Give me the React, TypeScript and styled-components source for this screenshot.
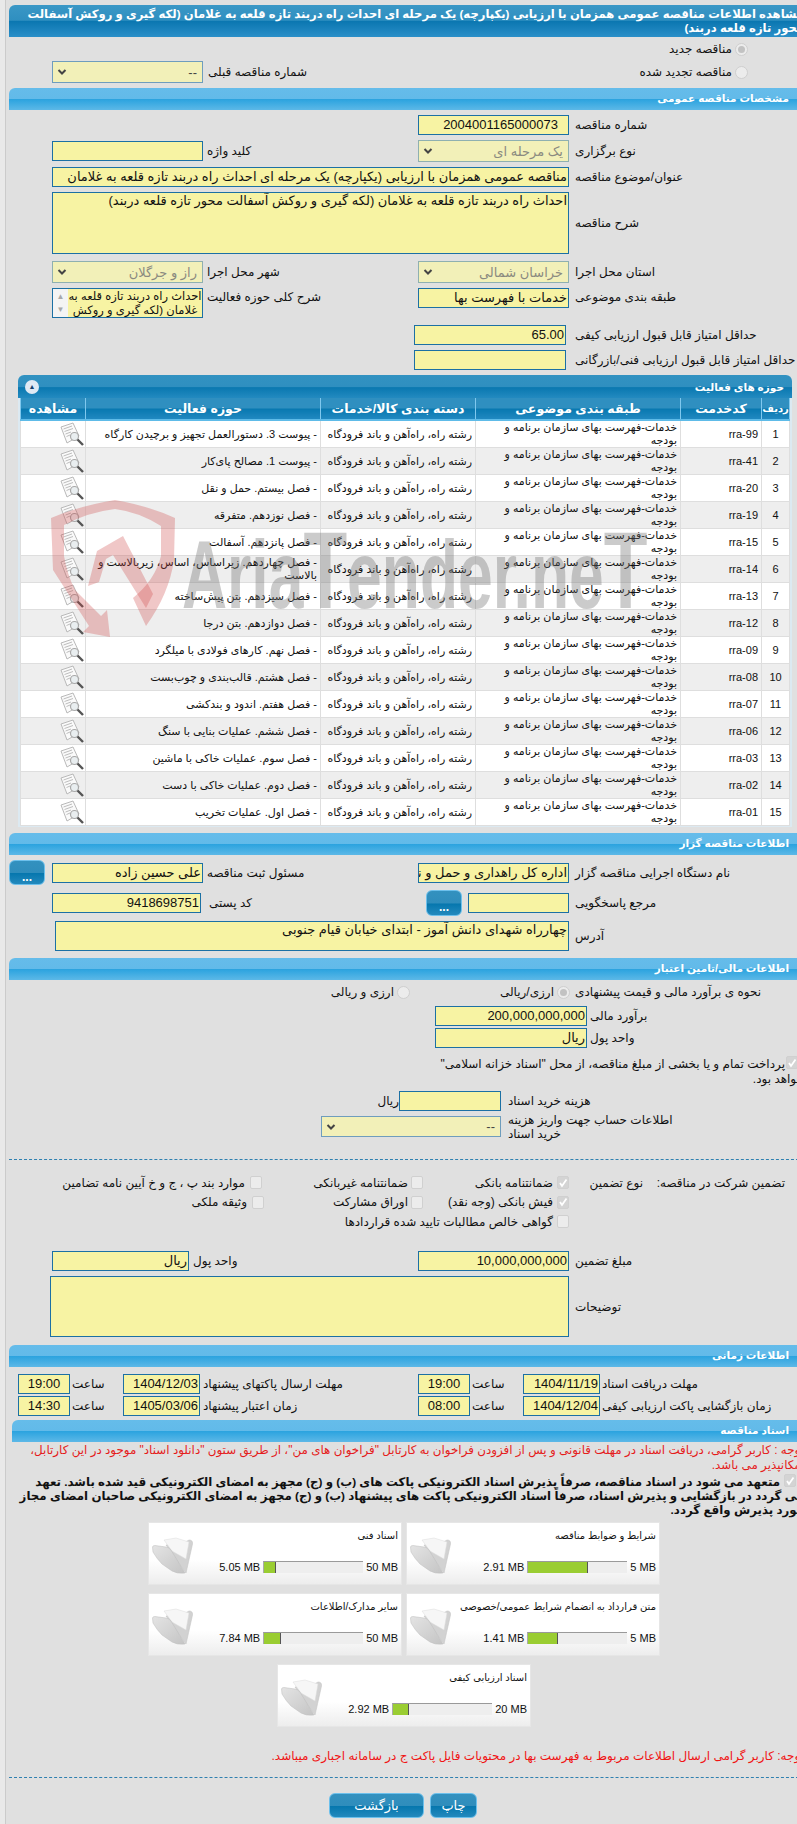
import React from "react";
import styled, { createGlobalStyle } from "styled-components";

const GlobalStyle = createGlobalStyle`
  html, body {
    margin: 0;
    padding: 0;
    overflow: hidden;
    background: #e9e9e9;
  }
  body {
    font-family: "Liberation Sans", "DejaVu Sans", sans-serif;
    color: #111;
  }
`;

const Page = styled.div`
  position: relative;
  box-sizing: border-box;
  direction: rtl;
  width: 799px;
  height: 1824px;
  margin-left: 5px;
  padding: 5px 0 0 3px;
  border-left: 1px solid #cbcbcb;
  background: #e0e0e0;
  font-size: 12px;
`;

const TitleBar = styled.div`
  box-sizing: border-box;
  height: 32px;
  padding: 2px 0 0 6px;
  border-radius: 6px 0 0 0;
  background: linear-gradient(#3a97c6 0, #2f8fc0 48%, #0a76b0 50%, #2a8fc8 100%);
  color: #fff;
  font-size: 11.6px;
  font-weight: bold;
  line-height: 14px;
`;

const SectionBar = styled.div<{ $mt?: number; $ml?: number }>`
  box-sizing: border-box;
  height: 22px;
  margin-top: ${(p) => p.$mt ?? 0}px;
  margin-left: ${(p) => p.$ml ?? 0}px;
  padding-right: 15px;
  border-radius: 6px 0 0 0;
  background: linear-gradient(#65bcea 0, #62bae9 50%, #2ba3df 51%, #5cb8e7 100%);
  color: #fff;
  font-size: 10.5px;
  font-weight: bold;
  line-height: 21px;
`;

const Row = styled.div<{ $mt?: number; $h?: number; $align?: string }>`
  display: flex;
  align-items: ${(p) => p.$align ?? "center"};
  height: ${(p) => p.$h ?? 20}px;
  margin-top: ${(p) => p.$mt ?? 0}px;
`;

const Label = styled.div<{ $w: number; $gap?: number; $lh?: number; $h?: number }>`
  flex: none;
  width: ${(p) => p.$w}px;
  height: ${(p) => (p.$h ? `${p.$h}px` : "auto")};
  margin-left: ${(p) => p.$gap ?? 6}px;
  font-size: 12px;
  line-height: ${(p) => p.$lh ?? (p.$h ?? 14)}px;
  text-align: left;
  white-space: nowrap;
`;

const Input = styled.div<{ $w: number; $h?: number; $mr?: number; $wrap?: boolean }>`
  flex: none;
  box-sizing: border-box;
  width: ${(p) => p.$w}px;
  height: ${(p) => p.$h ?? 20}px;
  margin-right: ${(p) => p.$mr ?? 0}px;
  padding: 0 1px;
  overflow: hidden;
  border: 1px solid #1c70a4;
  background: #f7f3a3;
  font-size: 13px;
  line-height: ${(p) => (p.$wrap ? 16 : (p.$h ?? 20) - 2)}px;
  text-align: right;
  white-space: ${(p) => (p.$wrap ? "normal" : "nowrap")};
`;

const CenterText = styled.span`
  display: block;
  padding-left: 14px;
  text-align: center;
`;

const TimeText = styled.span`
  display: block;
  text-align: center;
`;

const Select = styled.div<{ $w: number; $h?: number; $muted?: boolean }>`
  flex: none;
  display: flex;
  align-items: center;
  justify-content: space-between;
  box-sizing: border-box;
  width: ${(p) => p.$w}px;
  height: ${(p) => p.$h ?? 22}px;
  padding: 0 5px 0 4px;
  border: 1px solid ${(p) => (p.$muted ? "#8fb0b0" : "#6f9dbd")};
  background: #f2f0b8;
  color: ${(p) => (p.$muted ? "#8a8a80" : "#444")};
  font-size: 13px;
  white-space: nowrap;
`;

const ListBox = styled.div`
  flex: none;
  display: flex;
  box-sizing: border-box;
  width: 151px;
  height: 30px;
  overflow: hidden;
  border: 1px solid #1c70a4;
  background: #fff;
`;

const ListText = styled.div`
  flex: 1;
  background: #f7f3a3;
  font-size: 11.5px;
  line-height: 14px;
  text-align: center;
`;

const ListScroll = styled.div`
  flex: none;
  display: flex;
  flex-direction: column;
  justify-content: space-between;
  align-items: center;
  width: 15px;
  padding: 3px 0;
  box-sizing: border-box;
  background: #f4f4f4;
  color: #a8a8a8;
  font-size: 8px;
  line-height: 9px;
`;

const RadioDot = styled.span<{ $on?: boolean }>`
  flex: none;
  position: relative;
  display: inline-block;
  box-sizing: border-box;
  width: 13px;
  height: 13px;
  border: 1px solid #cfcfcf;
  border-radius: 50%;
  background: #ececec;
  &::after {
    content: "";
    display: ${(p) => (p.$on ? "block" : "none")};
    position: absolute;
    inset: 2px;
    border-radius: 50%;
    background: #c2c2c2;
  }
`;

const CheckBox = styled.span<{ $on?: boolean }>`
  flex: none;
  display: inline-flex;
  align-items: center;
  justify-content: center;
  box-sizing: border-box;
  width: 12px;
  height: 13px;
  border: 1px solid #d0d0d0;
  border-radius: 2px;
  background: ${(p) => (p.$on ? "#d4d4d4" : "#ececec")};
`;

const OptionRow = styled.div<{ $w?: number; $gap?: number; $mr?: number }>`
  flex: none;
  display: flex;
  align-items: center;
  gap: ${(p) => p.$gap ?? 3}px;
  width: ${(p) => (p.$w ? `${p.$w}px` : "auto")};
  margin-right: ${(p) => p.$mr ?? 0}px;
  font-size: 12px;
  white-space: nowrap;
`;

const Panel = styled.div`
  position: relative;
  box-sizing: border-box;
  width: 774px;
  height: 452px;
  margin: 5px 12px 0 0;
  padding: 0 2px 0 3px;
  border-radius: 6px 6px 0 0;
  background: #dce9f1;
`;

const PanelBar = styled.div`
  display: flex;
  align-items: center;
  justify-content: space-between;
  box-sizing: border-box;
  height: 23px;
  margin: 0 -2px 0 -3px;
  padding: 0 8px 0 5px;
  border-radius: 6px 6px 0 0;
  background: linear-gradient(#3292c1 0, #2f8fc0 50%, #0a78b0 55%, #238ac0 100%);
  color: #fff;
  font-size: 10.5px;
  font-weight: bold;
`;

const Collapse = styled.span`
  display: flex;
  align-items: center;
  justify-content: center;
  width: 14px;
  height: 14px;
  margin-left: 2px;
  border-radius: 50%;
  background: #dfe9f4;
  color: #16406e;
  font-size: 7px;
`;

const Table = styled.table`
  width: 769px;
  border-collapse: collapse;
  table-layout: fixed;
  font-size: 11px;
`;

const Head = styled.th<{ $fs?: number }>`
  height: 21px;
  padding: 0;
  overflow: hidden;
  border-left: 1px solid #7fc8ee;
  border-right: 1px solid #7fc8ee;
  border-bottom: 2px solid #5ebbe8;
  background: linear-gradient(#2f8fc0 0, #2f8fc0 48%, #0878b0 52%, #2088c0 100%);
  color: #fff;
  font-size: ${(p) => p.$fs ?? 12.5}px;
  font-weight: bold;
  white-space: nowrap;
`;

const Tr = styled.tr<{ $alt?: boolean }>`
  background: ${(p) => (p.$alt ? "#eeeeee" : "#ffffff")};
`;

const Td = styled.td<{ $center?: boolean; $nowrap?: boolean }>`
  box-sizing: border-box;
  height: 27px;
  padding: 0 3px;
  overflow: hidden;
  border-left: 1px solid #dedede;
  border-right: 1px solid #dedede;
  border-bottom: 1px solid #dedede;
  line-height: 13px;
  text-align: ${(p) => (p.$center ? "center" : "right")};
  vertical-align: middle;
  white-space: ${(p) => (p.$nowrap ? "nowrap" : "normal")};
`;

const ViewCell = styled(Td)`
  padding: 0;
`;

const Watermark = styled.div`
  position: absolute;
  top: 498px;
  left: 39px;
  display: flex;
  direction: ltr;
  pointer-events: none;
`;

const WatermarkText = styled.div`
  position: absolute;
  top: 32px;
  left: 137px;
  transform: scaleX(0.65);
  transform-origin: left top;
  color: rgba(110, 110, 110, 0.36);
  font-size: 96px;
  font-weight: bold;
  line-height: 90px;
  white-space: nowrap;
`;

const BigLetter = styled.span`
  font-size: 110px;
  line-height: 1px;
`;

const Dots = styled.button<{ $mr?: number; $w?: number; $h?: number }>`
  flex: none;
  box-sizing: border-box;
  width: ${(p) => p.$w ?? 36}px;
  height: ${(p) => p.$h ?? 25}px;
  margin-right: ${(p) => p.$mr ?? 0}px;
  padding: 8px 0 0;
  border: 1px solid #6cc0ec;
  border-radius: 6px;
  background: linear-gradient(#3391bf 0, #2f8dbc 50%, #0677ae 54%, #2389bd 100%);
  color: #fff;
  font-family: inherit;
  font-size: 12px;
  font-weight: bold;
  line-height: 12px;
`;

const Paragraph = styled.div<{
  $w?: number;
  $h?: number;
  $mt?: number;
  $color?: string;
  $bold?: boolean;
  $lh?: number;
  $fs?: number;
}>`
  width: ${(p) => (p.$w ? `${p.$w}px` : "auto")};
  height: ${(p) => (p.$h ? `${p.$h}px` : "auto")};
  margin-top: ${(p) => p.$mt ?? 0}px;
  color: ${(p) => p.$color ?? "#111"};
  font-size: ${(p) => p.$fs ?? 12}px;
  font-weight: ${(p) => (p.$bold ? "bold" : "normal")};
  line-height: ${(p) => p.$lh ?? 15}px;
`;

const Dashed = styled.div<{ $mt: number }>`
  margin-top: ${(p) => p.$mt}px;
  border-top: 1px dashed #2f80b0;
`;

const GuaranteeGrid = styled.div`
  display: grid;
  grid-template-columns: 142px 74px 146px 161px 1fr;
  grid-auto-rows: 19.5px;
  align-items: center;
  margin-top: 13px;
  padding-right: 19px;
  font-size: 12px;
`;

const Cards = styled.div`
  display: flex;
  flex-wrap: wrap;
  justify-content: center;
  gap: 8px 4px;
  width: 512px;
  margin: 6px 144px 0 0;
`;

const Card = styled.div`
  display: flex;
  align-items: stretch;
  box-sizing: border-box;
  width: 254px;
  height: 63px;
  padding: 6px 3px 0 3px;
  background: linear-gradient(#fff 0, #fff 60%, #ededed 100%);
  border: 1px solid #e6e6e6;
`;

const CardBody = styled.div`
  flex: 1;
  display: flex;
  flex-direction: column;
  justify-content: space-between;
  height: 44px;
`;

const CardTitle = styled.div`
  font-size: 10px;
  line-height: 14px;
  white-space: nowrap;
`;

const Meter = styled.div`
  display: flex;
  align-items: center;
  gap: 3px;
  line-height: 12px;
  white-space: nowrap;
`;

const MeterText = styled.span`
  direction: ltr;
  font-size: 11px;
`;

const MeterBar = styled.div`
  flex: none;
  display: flex;
  box-sizing: border-box;
  width: 100px;
  height: 12px;
  border-top: 1px solid #9a9a9a;
  border-left: 1px solid #aaa;
  background: #eeeeee;
  direction: ltr;
`;

const MeterFill = styled.div`
  box-sizing: border-box;
  height: 100%;
  border-right: 1px solid #555;
  background: #9acd32;
`;

const Buttons = styled.div`
  display: flex;
  justify-content: center;
  gap: 6px;
  margin: 15px 327px 0 0;
  width: 148px;
`;

const ActionButton = styled.button<{ $w: number }>`
  box-sizing: border-box;
  width: ${(p) => p.$w}px;
  height: 25px;
  padding: 0;
  border: 1px solid #6cc0ec;
  border-radius: 6px;
  background: linear-gradient(#3391bf 0, #2f8dbc 50%, #0677ae 54%, #2389bd 100%);
  color: #fff;
  font-family: inherit;
  font-size: 13px;
`;

function Chevron() {
  return (
    <svg width="10" height="8" viewBox="0 0 10 8">
      <path d="M1.5 2 L5 5.5 L8.5 2" fill="none" stroke="#444" strokeWidth="2" />
    </svg>
  );
}

function Tick() {
  return (
    <svg width="10" height="10" viewBox="0 0 10 10">
      <path d="M2 5 L4 8 L8.5 1.5" fill="none" stroke="#fff" strokeWidth="1.8" />
    </svg>
  );
}

function DocSearch() {
  return (
    <svg width="25" height="24" viewBox="0 0 25 24" style={{ display: "block", marginLeft: "auto", marginRight: 0 }}>
      <path d="M1 5 L13 1 L19 14 L7 21 Z" fill="#fafafa" stroke="#b9b9b9" />
      <path d="M3.5 7 L12 4 M4.5 9.5 L13 6.5 M5.5 12 L11 10 M6.5 14.5 L10 13" stroke="#bdbdbd" />
      <circle cx="14.5" cy="14.5" r="4" fill="#e9eef0" stroke="#a8a8a8" strokeWidth="1.2" />
      <path d="M17.5 17.5 L23 23" stroke="#555" strokeWidth="2.4" />
    </svg>
  );
}

function Folder() {
  return (
    <svg width="41" height="37" viewBox="0 0 41 37" style={{ flex: "none", marginTop: 8 }}>
      <defs>
        <linearGradient id="folderFront" x1="0" y1="0" x2="1" y2="1">
          <stop offset="0" stopColor="#e4e4e4" />
          <stop offset="1" stopColor="#c4c4c4" />
        </linearGradient>
      </defs>
      <path d="M14 8 L30 7 L37 3 Q41 3 40.5 7 L34 36 Z" fill="#d2d2d2" stroke="#c6c6c6" strokeWidth="0.6" />
      <path d="M12 3 L24 1 L37 5 L34 22 L20 14 Z" fill="#f6f6f6" stroke="#dcdcdc" strokeWidth="0.5" />
      <path
        d="M0.5 10 Q0.5 8.5 3 8.5 L14 10 Q17 10.5 19 13 L33 36 Q25 37 20 34 L10 27 Q5 22 1 15 Z"
        fill="url(#folderFront)"
        stroke="#bdbdbd"
        strokeWidth="0.5"
      />
    </svg>
  );
}

function Shield() {
  return (
    <svg width="134" height="144" viewBox="0 0 134 144">
      <path
        d="M6 20 Q34 8 70 2 Q104 8 130 20 L129 62 Q124 96 101 128 L88 100 Q110 82 116 58 L116 28 Q94 14 70 11 Q44 14 19 27 L19 58 Q22 76 30 92 L56 118 L62 112 L65 139 L38 134 L44 128 L8 72 Z"
        fill="rgba(205,70,70,0.3)"
      />
      <path d="M78 38 L52 53 L43 88 L54 84 L61 61 L68 57 L101 110 L108 96 Z" fill="rgba(205,70,70,0.3)" />
    </svg>
  );
}

const ACTIVITIES = [
  ["rra-99", "- پیوست 3. دستورالعمل تجهیز و برچیدن کارگاه"],
  ["rra-41", "- پیوست 1. مصالح پای‌کار"],
  ["rra-20", "- فصل بیستم. حمل و نقل"],
  ["rra-19", "- فصل نوزدهم. متفرقه"],
  ["rra-15", "- فصل پانزدهم. آسفالت"],
  ["rra-14", "- فصل چهاردهم. زیراساس، اساس، زیربالاست  و بالاست"],
  ["rra-13", "- فصل سیزدهم. بتن پیش‌ساخته"],
  ["rra-12", "- فصل دوازدهم. بتن درجا"],
  ["rra-09", "- فصل نهم. کارهای فولادی با میلگرد"],
  ["rra-08", "- فصل هشتم. قالب‌بندی و چوب‌بست"],
  ["rra-07", "- فصل هفتم. اندود و بندکشی"],
  ["rra-06", "- فصل ششم. عملیات بنایی با سنگ"],
  ["rra-03", "- فصل سوم. عملیات خاکی با ماشین"],
  ["rra-02", "- فصل دوم. عملیات خاکی با دست"],
  ["rra-01", "- فصل اول. عملیات تخریب"],
];

const DOCS = [
  ["شرایط و ضوابط مناقصه", "2.91 MB", "5 MB", 60],
  ["اسناد فنی", "5.05 MB", "50 MB", 12],
  ["متن قرارداد به انضمام شرایط عمومی/خصوصی", "1.41 MB", "5 MB", 30],
  ["سایر مدارک/اطلاعات", "7.84 MB", "50 MB", 17],
  ["اسناد ارزیابی کیفی", "2.92 MB", "20 MB", 16],
] as const;

export default function App() {
  return (
    <Page>
      <GlobalStyle />
      <TitleBar>
        مشاهده اطلاعات مناقصه عمومی همزمان با ارزیابی (یکپارچه) یک مرحله ای احداث راه دربند تازه قلعه به غلامان (لکه گیری و روکش آسفالت محور تازه قلعه دربند)
      </TitleBar>

      <Row $mt={1} $h={22}>
        <OptionRow $mr={56}>
          <RadioDot $on />
          مناقصه جدید
        </OptionRow>
      </Row>
      <Row $mt={1} $h={22}>
        <OptionRow $w={360} $mr={56}>
          <RadioDot />
          مناقصه تجدید شده
        </OptionRow>
        <Label $w={180} $gap={5}>شماره مناقصه قبلی</Label>
        <Select $w={151}>
          <span>--</span>
          <Chevron />
        </Select>
      </Row>

      <SectionBar $mt={5}>مشخصات مناقصه عمومی</SectionBar>

      <Row $mt={5}>
        <Label $w={229}>شماره مناقصه</Label>
        <Input $w={151}><CenterText>2004001165000073</CenterText></Input>
      </Row>
      <Row $mt={5} $h={22}>
        <Label $w={229}>نوع برگزاری</Label>
        <Select $w={151} $muted>
          <span>یک مرحله ای</span>
          <Chevron />
        </Select>
        <Label $w={211} $gap={4}>کلید واژه</Label>
        <Input $w={151} />
      </Row>
      <Row $mt={5}>
        <Label $w={229}>عنوان/موضوع مناقصه</Label>
        <Input $w={517}>مناقصه عمومی همزمان با ارزیابی (یکپارچه) یک مرحله ای احداث راه دربند تازه قلعه به غلامان</Input>
      </Row>
      <Row $mt={5} $h={62}>
        <Label $w={229}>شرح مناقصه</Label>
        <Input $w={517} $h={62} $wrap>احداث راه دربند تازه قلعه به غلامان (لکه گیری و روکش آسفالت محور تازه قلعه دربند)</Input>
      </Row>
      <Row $mt={7} $h={22}>
        <Label $w={229}>استان محل اجرا</Label>
        <Select $w={151} $muted>
          <span>خراسان شمالی</span>
          <Chevron />
        </Select>
        <Label $w={211} $gap={4}>شهر محل اجرا</Label>
        <Select $w={151} $muted>
          <span>راز و جرگلان</span>
          <Chevron />
        </Select>
      </Row>
      <Row $mt={5} $h={30} $align="flex-start">
        <Label $w={229} $h={18}>طبقه بندی موضوعی</Label>
        <Input $w={151}>خدمات با فهرست بها</Input>
        <Label $w={211} $gap={4} $h={18}>شرح کلی حوزه فعالیت</Label>
        <ListBox>
          <ListText>احداث راه دربند تازه قلعه به غلامان (لکه گیری و روکش</ListText>
          <ListScroll>
            <span>▲</span>
            <span>▼</span>
          </ListScroll>
        </ListBox>
      </Row>
      <Row $mt={7}>
        <Label $w={229}>حداقل امتیاز قابل قبول ارزیابی کیفی</Label>
        <Input $w={152} $mr={3}>65.00</Input>
      </Row>
      <Row $mt={5}>
        <Label $w={229}>حداقل امتیاز قابل قبول ارزیابی فنی/بازرگانی</Label>
        <Input $w={152} $mr={3} />
      </Row>

      <Panel>
        <PanelBar>
          <span>حوزه های فعالیت</span>
          <Collapse>▲</Collapse>
        </PanelBar>
        <Table>
          <colgroup>
            <col style={{ width: 28 }} />
            <col style={{ width: 81 }} />
            <col style={{ width: 205 }} />
            <col style={{ width: 155 }} />
            <col style={{ width: 235 }} />
            <col style={{ width: 65 }} />
          </colgroup>
          <thead>
            <tr>
              <Head $fs={10}>ردیف</Head>
              <Head>کدخدمت</Head>
              <Head>طبقه بندی موضوعی</Head>
              <Head>دسته بندی کالا/خدمات</Head>
              <Head>حوزه فعالیت</Head>
              <Head>مشاهده</Head>
            </tr>
          </thead>
          <tbody>
            {ACTIVITIES.map(([code, activity], i) => (
              <Tr key={code} $alt={i % 2 === 1}>
                <Td $center>{i + 1}</Td>
                <Td>{code}</Td>
                <Td>خدمات-فهرست بهای سازمان برنامه و بودجه</Td>
                <Td $nowrap>رشته راه، راه‌آهن و باند فرودگاه</Td>
                <Td>{activity}</Td>
                <ViewCell><DocSearch /></ViewCell>
              </Tr>
            ))}
          </tbody>
        </Table>
      </Panel>

      <Watermark>
        <Shield />
        <WatermarkText>Aria<BigLetter>T</BigLetter>ender.ne<BigLetter>T</BigLetter></WatermarkText>
      </Watermark>

      <SectionBar $mt={6}>اطلاعات مناقصه گزار</SectionBar>
      <Row $mt={5} $h={25}>
        <Label $w={229}>نام دستگاه اجرایی مناقصه گزار</Label>
        <Input $w={151}>اداره کل راهداری و حمل و نقل جاده ای</Input>
        <Label $w={211} $gap={4}>مسئول ثبت مناقصه</Label>
        <Input $w={151}>علی حسین زاده</Input>
        <Dots $mr={7}>...</Dots>
      </Row>
      <Row $mt={5} $h={26}>
        <Label $w={229}>مرجع پاسخگویی</Label>
        <Input $w={101}></Input>
        <Dots $mr={6} $h={26}>...</Dots>
        <Label $w={217} $gap={8}>کد پستی</Label>
        <Input $w={149}>9418698751</Input>
      </Row>
      <Row $mt={5} $h={30}>
        <Label $w={229}>آدرس</Label>
        <Input $w={514} $h={30} $wrap>چهارراه شهدای دانش آموز - ابتدای خیابان قیام جنوبی</Input>
      </Row>

      <SectionBar $mt={7}>اطلاعات مالی/تامین اعتبار</SectionBar>
      <Row $mt={2}>
        <Label $w={229} $gap={5}>نحوه ی برآورد مالی و قیمت پیشنهادی</Label>
        <OptionRow $w={160}>
          <RadioDot $on />
          ارزی/ریالی
        </OptionRow>
        <OptionRow>
          <RadioDot />
          ارزی و ریالی
        </OptionRow>
      </Row>
      <Row $mt={4}>
        <Label $w={214} $gap={3}>برآورد مالی</Label>
        <Input $w={152}>200,000,000,000</Input>
      </Row>
      <Row $mt={2}>
        <Label $w={214} $gap={3}>واحد پول</Label>
        <Input $w={152}>ریال</Input>
      </Row>
      <Paragraph $w={382} $h={30} $mt={8}>
        <CheckBox $on style={{ marginLeft: 1, marginRight: 6 }}><Tick /></CheckBox>
        پرداخت تمام و یا بخشی از مبلغ مناقصه، از محل "اسناد خزانه اسلامی" خواهد بود.
      </Paragraph>
      <Row $mt={5}>
        <Label $w={296} $gap={7}>هزینه خرید اسناد</Label>
        <Input $w={102} />
        <span>ریال</span>
      </Row>
      <Row $mt={5} $h={21}>
        <Label $w={296} $gap={7} $lh={14}>
          اطلاعات حساب جهت واریز هزینه
          <br />
          خرید اسناد
        </Label>
        <Select $w={180} $h={21}>
          <span>--</span>
          <Chevron />
        </Select>
      </Row>
      <Dashed $mt={22} />

      <GuaranteeGrid>
        <span>تضمین شرکت در مناقصه:</span>
        <span>نوع تضمین</span>
        <OptionRow $gap={4}><CheckBox $on><Tick /></CheckBox>ضمانتنامه بانکی</OptionRow>
        <OptionRow><CheckBox />ضمانتنامه غیربانکی</OptionRow>
        <OptionRow $gap={5}><CheckBox />موارد بند پ ، ج و خ آیین نامه تضامین</OptionRow>
        <span />
        <span />
        <OptionRow $gap={4}><CheckBox $on><Tick /></CheckBox>فیش بانکی (وجه نقد)</OptionRow>
        <OptionRow><CheckBox />اوراق مشارکت</OptionRow>
        <OptionRow $gap={5} $mr={-2}><CheckBox />وثیقه ملکی</OptionRow>
        <span />
        <span />
        <OptionRow $gap={4}><CheckBox />گواهی خالص مطالبات تایید شده قراردادها</OptionRow>
      </GuaranteeGrid>

      <Row $mt={19.5}>
        <Label $w={229}>مبلغ تضمین</Label>
        <Input $w={151}>10,000,000,000</Input>
        <Label $w={225} $gap={4}>واحد پول</Label>
        <Input $w={137}>ریال</Input>
      </Row>
      <Row $mt={5} $h={61}>
        <Label $w={229}>توضیحات</Label>
        <Input $w={519} $h={61} />
      </Row>

      <SectionBar $mt={8}>اطلاعات زمانی</SectionBar>
      <Row $mt={7}>
        <Label $w={202} $gap={2}>مهلت دریافت اسناد</Label>
        <Input $w={77}>1404/11/19</Input>
        <Label $w={51} $gap={2}>ساعت</Label>
        <Input $w={52}><TimeText>19:00</TimeText></Input>
        <Label $w={215} $gap={3}>مهلت ارسال پاکتهای پیشنهاد</Label>
        <Input $w={77}>1404/12/03</Input>
        <Label $w={51} $gap={2}>ساعت</Label>
        <Input $w={52}><TimeText>19:00</TimeText></Input>
      </Row>
      <Row $mt={2}>
        <Label $w={202} $gap={2}>زمان بازگشایی پاکت ارزیابی کیفی</Label>
        <Input $w={77}>1404/12/04</Input>
        <Label $w={51} $gap={2}>ساعت</Label>
        <Input $w={52}><TimeText>08:00</TimeText></Input>
        <Label $w={215} $gap={3}>زمان اعتبار پیشنهاد</Label>
        <Input $w={77}>1405/03/06</Input>
        <Label $w={51} $gap={2}>ساعت</Label>
        <Input $w={52}><TimeText>14:30</TimeText></Input>
      </Row>

      <SectionBar $mt={4} $ml={3}>اسناد مناقصه</SectionBar>
      <Paragraph $w={780} $h={30} $mt={1} $color="#e51c1c" $fs={11.9}>
        توجه : کاربر گرامی، دریافت اسناد در مهلت قانونی و پس از افزودن فراخوان به کارتابل "فراخوان های من"، از طریق ستون "دانلود اسناد" موجود در این کارتابل، امکانپذیر می باشد.
      </Paragraph>
      <Paragraph $w={792} $h={42} $mt={1} $bold $lh={14} $fs={11.8}>
        <CheckBox $on style={{ marginLeft: 4, marginRight: 8 }}><Tick /></CheckBox>
        متعهد می شود در اسناد مناقصه، صرفاً پذیرش اسناد الکترونیکی پاکت های (ب) و (ج) مجهز به امضای الکترونیکی قید شده باشد. تعهد
        <br />
        می گردد در بازگشایی و پذیرش اسناد، صرفاً اسناد الکترونیکی پاکت های پیشنهاد (ب) و (ج) مجهز به امضای الکترونیکی صاحبان امضای مجاز مورد پذیرش واقع گردد.
      </Paragraph>

      <Cards>
        {DOCS.map(([title, used, total, pct]) => (
          <Card key={title}>
            <CardBody>
              <CardTitle>{title}</CardTitle>
              <Meter>
                <MeterText>{total}</MeterText>
                <MeterBar>
                  <MeterFill style={{ width: `${pct}%` }} />
                </MeterBar>
                <MeterText>{used}</MeterText>
              </Meter>
            </CardBody>
            <Folder />
          </Card>
        ))}
      </Cards>

      <Paragraph $mt={22} $color="#f01414">
        توجه: کاربر گرامی ارسال اطلاعات مربوط به فهرست بها در محتویات فایل پاکت ج در سامانه اجباری میباشد.
      </Paragraph>
      <Dashed $mt={13} />

      <Buttons>
        <ActionButton $w={47}>چاپ</ActionButton>
        <ActionButton $w={95}>بازگشت</ActionButton>
      </Buttons>
    </Page>
  );
}
